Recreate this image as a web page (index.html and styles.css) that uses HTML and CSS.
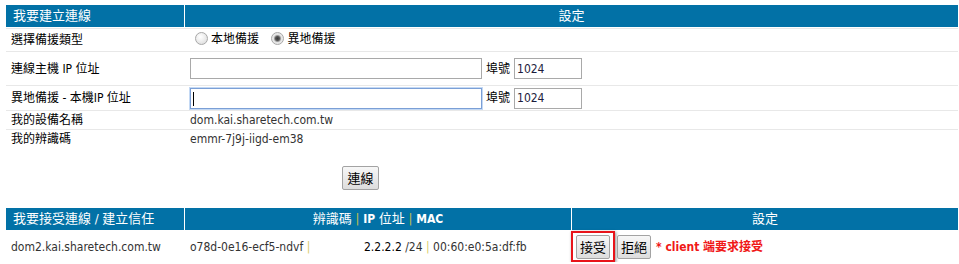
FILE: index.html
```html
<!DOCTYPE html>
<html lang="zh-Hant">
<head>
  <meta charset="UTF-8">
  <meta name="viewport" content="width=device-width, initial-scale=1.0">
  <title>異地備援</title>
  <link rel="stylesheet" href="styles.css">
</head>
<body>
  <table class="grid setup">
    <tr>
      <th class="title">我要建立連線</th>
      <th>設定</th>
    </tr>
    <tr class="row-type">
      <td class="label">選擇備援類型</td>
      <td class="value">
        <label><input type="radio" name="mode">本地備援</label>
        <label><input type="radio" name="mode" checked>異地備援</label>
      </td>
    </tr>
    <tr class="row-host">
      <td class="label">連線主機 IP 位址</td>
      <td class="value">
        <div class="field">
          <input type="text" class="ip-input">
          <span>埠號</span>
          <input type="text" class="port-input" value="1024">
        </div>
      </td>
    </tr>
    <tr class="row-local">
      <td class="label">異地備援 - 本機IP 位址</td>
      <td class="value">
        <div class="field">
          <span class="caret-wrap"><input type="text" class="ip-input focused"></span>
          <span>埠號</span>
          <input type="text" class="port-input" value="1024">
        </div>
      </td>
    </tr>
    <tr class="row-info">
      <td class="label">我的設備名稱</td>
      <td class="value text">dom.kai.sharetech.com.tw</td>
    </tr>
    <tr class="row-info last">
      <td class="label">我的辨識碼</td>
      <td class="value text">emmr-7j9j-iigd-em38</td>
    </tr>
  </table>

  <div class="connect">
    <button class="btn">連線</button>
  </div>

  <table class="grid accept">
    <tr>
      <th class="title">我要接受連線 / 建立信任</th>
      <th class="mid">辨識碼 <span class="sep">|</span> <b>IP</b> 位址 <span class="sep">|</span> <b>MAC</b></th>
      <th>設定</th>
    </tr>
    <tr class="row-client">
      <td class="label text">dom2.kai.sharetech.com.tw</td>
      <td class="value text">
        <span class="client-id">o78d-0e16-ecf5-ndvf <span class="sep">|</span></span><span class="ip">2.2.2.2</span> <span class="mask">/24</span> <span class="sep">|</span> 00:60:e0:5a:df:fb
      </td>
      <td class="actions">
        <div class="action-row">
          <span class="highlight"><button class="btn">接受</button></span>
          <button class="btn">拒絕</button>
          <span class="notice">* client 端要求接受</span>
        </div>
      </td>
    </tr>
  </table>
</body>
</html>
```

FILE: styles.css
```css
body {
  margin: 5px 1px 0 6px;
  font-family: "DejaVu Sans Condensed", "Noto Sans CJK TC", sans-serif;
  font-size: 12px;
  line-height: 16px;
  color: #000;
  background: #fff;
}

.grid {
  width: 100%;
  border-collapse: separate;
  border-spacing: 0;
}

.grid th {
  height: 22px;
  padding: 0;
  background: #0271a6;
  color: #fff;
  font-size: 13px;
  font-weight: normal;
  text-align: center;
  border-left: 1px solid #fff;
  border-bottom: 1px solid #fff;
}

.grid th.title {
  width: 171px;
  padding-left: 7px;
  text-align: left;
  border-left: 0;
}

.grid th b {
  font-size: 12px;
}

.grid td {
  padding: 0;
  border-top: 1px solid #e8e8e8;
  vertical-align: middle;
}

.grid td.label {
  padding-left: 5px;
}

.grid td.value {
  padding-left: 6px;
}

.text {
  color: #333;
}

.row-type td {
  height: 22px;
}

.row-host td {
  height: 33px;
}

.row-local td {
  height: 24px;
}

.row-info td {
  height: 18px;
}

.row-info.last td {
  height: 17px;
}

.value label {
  display: inline-flex;
  align-items: center;
  margin-right: 4px;
}

input[type="radio"] {
  appearance: none;
  width: 13px;
  height: 13px;
  margin: 0 3px 0 5px;
  border: 1px solid #a8a8a8;
  border-radius: 50%;
  background: radial-gradient(circle at 40% 35%, #fff 0, #f0f0f0 40%, #d6d6d6 100%);
}

input[type="radio"]:checked {
  background: radial-gradient(circle, #3a3a3a 0, #555 2px, #9a9a9a 3px, #e4e4e4 4px, #f2f2f2 100%);
}

.field {
  display: flex;
  align-items: center;
  gap: 4px;
}

.field input {
  box-sizing: border-box;
  height: 21px;
  padding: 1px 2px;
  margin: 0;
  border: 1px solid #a9a9a9;
  font-family: "DejaVu Sans Condensed", sans-serif;
  font-size: 12px;
  color: #1c1c3c;
  outline: none;
}

.ip-input {
  width: 292px;
}

.port-input {
  width: 68px;
}

.ip-input.focused {
  border-color: #7b9fd6;
  box-shadow: 0 0 0 1px #c4d9f4;
}

.caret-wrap {
  position: relative;
  display: flex;
}

.caret-wrap::after {
  content: "";
  position: absolute;
  left: 3px;
  top: 4px;
  width: 1px;
  height: 14px;
  background: #000;
}

.connect {
  padding: 19px 0 18px 336px;
}

.btn {
  box-sizing: border-box;
  height: 24px;
  padding: 0;
  border: 1px solid #a3a3a3;
  border-radius: 2px;
  background: linear-gradient(#f7f7f7, #dddddd);
  font-family: "Noto Sans CJK TC", sans-serif;
  font-size: 13px;
  line-height: 20px;
  white-space: nowrap;
  color: #000;
}

.connect .btn {
  width: 37px;
}

.accept th.mid {
  width: 386px;
}

.sep {
  color: #d9cc6a;
}

.accept th .sep {
  color: #c9c24a;
}

.row-client td {
  height: 28px;
  border-top: 0;
}

.client-id {
  display: inline-block;
  width: 174px;
}

.ip {
  color: #000;
}

.mask {
  color: #333;
}

.actions {
  padding-left: 1px;
}

.action-row {
  display: flex;
  align-items: center;
  gap: 2px;
}

.highlight {
  display: flex;
  padding: 2px 3px 1px;
  border: 2px solid #e8141a;
  box-shadow: 1px 1px 3px rgba(0, 0, 0, 0.45);
}

.highlight .btn,
.action-row .btn {
  width: 34px;
}

.notice {
  margin-left: 3px;
  color: #f01818;
  font-weight: bold;
  font-size: 12px;
}
```
